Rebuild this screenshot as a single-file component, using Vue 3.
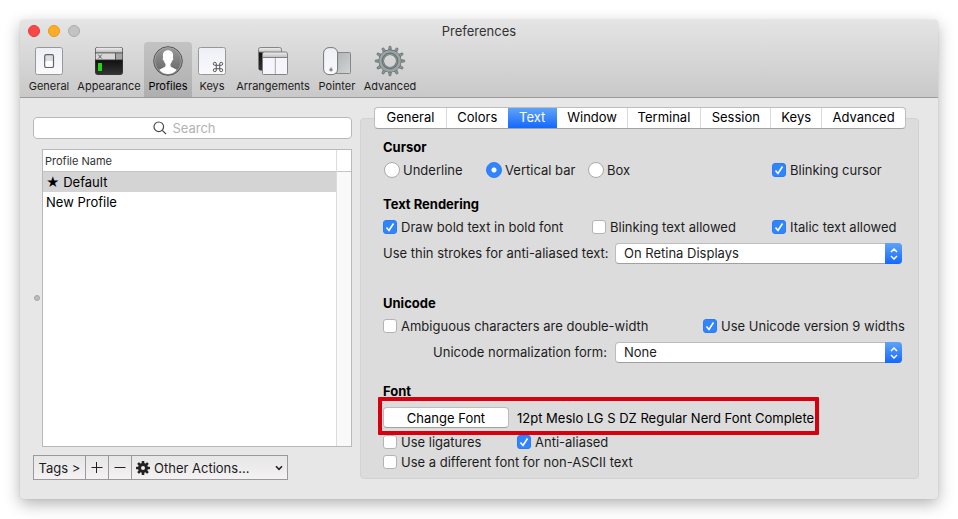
<script setup>
import { ref } from 'vue'

const tools = ['General', 'Appearance', 'Profiles', 'Keys', 'Arrangements', 'Pointer', 'Advanced']
const activeTool = ref('Profiles')

const tabs = ['General', 'Colors', 'Text', 'Window', 'Terminal', 'Session', 'Keys', 'Advanced']
const activeTab = ref('Text')

const profiles = ['★ Default', 'New Profile']
const activeProfile = ref('★ Default')

const search = ref('')
const cursor = ref('Vertical bar')
const cursors = ['Underline', 'Vertical bar', 'Box']

const blinkingCursor = ref(true)
const boldText = ref(true)
const blinkingText = ref(false)
const italicText = ref(true)
const ambiguous = ref(false)
const unicode9 = ref(true)
const ligatures = ref(false)
const antiAliased = ref(true)
const nonAscii = ref(false)
const strokes = ref('On Retina Displays')
const normalization = ref('None')

const teeth = Array.from({ length: 12 }, (_, i) => `rotate(${i * 30} 16 16)`)
const smallTeeth = Array.from({ length: 8 }, (_, i) => `rotate(${i * 45} 7 7)`)
</script>

<template>
  <div class="window">
    <svg class="defs" aria-hidden="true">
      <defs>
        <linearGradient id="paper" x1="0" y1="0" x2="0" y2="1">
          <stop offset="0" stop-color="#eeeff5" />
          <stop offset="1" stop-color="#fafafd" />
        </linearGradient>
        <linearGradient id="bar" x1="0" y1="0" x2="0" y2="1">
          <stop offset="0" stop-color="#f0f0f0" />
          <stop offset="1" stop-color="#bcbcbe" />
        </linearGradient>
        <linearGradient id="dark" x1="0" y1="0" x2="0" y2="1">
          <stop offset="0" stop-color="#111" />
          <stop offset="1" stop-color="#333" />
        </linearGradient>
        <linearGradient id="disc" x1="0" y1="0" x2="0" y2="1">
          <stop offset="0" stop-color="#9a9a9a" />
          <stop offset="1" stop-color="#626262" />
        </linearGradient>
        <linearGradient id="pad" x1="0" y1="0" x2="1" y2="1">
          <stop offset="0" stop-color="#aeb2b2" />
          <stop offset="1" stop-color="#d2d5d5" />
        </linearGradient>
      </defs>
    </svg>

    <header class="chrome">
      <div class="titlebar">
        <div class="lights">
          <button class="light red" aria-label="Close"></button>
          <button class="light amber" aria-label="Minimize"></button>
          <button class="light grey" aria-label="Zoom"></button>
        </div>
        <h1>Preferences</h1>
      </div>
      <nav class="toolbar">
        <button
          v-for="tool in tools"
          :key="tool"
          class="tool"
          :class="{ active: tool === activeTool }"
          @click="activeTool = tool"
        >
          <svg class="tool-icon" viewBox="0 0 32 32" aria-hidden="true">
            <g v-if="tool === 'General'">
              <rect x="2.5" y="2.5" width="27" height="27" rx="2" fill="url(#paper)" stroke="#98989a" />
              <rect x="11.700" y="9.700" width="8.800" height="12.800" rx="1.600" fill="#dcdde2" stroke="#626366" stroke-width="1.200" />
              <rect x="12.500" y="16" width="7.200" height="5.800" rx="1" fill="#fff" />
            </g>

            <g v-else-if="tool === 'Appearance'">
              <rect x="2" y="2" width="28" height="28" rx="3" fill="#3a3a3a" />
              <path d="M2.600 7.500V5q0-2.400 2.400-2.400h22q2.400 0 2.400 2.400v2.500z" fill="url(#bar)" />
              <rect x="2.600" y="8.300" width="19.400" height="6.200" fill="#d7d7d7" />
              <rect x="22.700" y="8.300" width="6.700" height="6.200" fill="#a3a5a7" />
              <path d="M5.200 9.600l3.600 4M8.800 9.600l-3.600 4" stroke="#555" stroke-width=".9" />
              <path d="M2.600 15.200h26.800V27q0 2.400-2.400 2.400H5q-2.400 0-2.400-2.400z" fill="url(#dark)" />
              <rect x="5" y="18" width="4" height="8" fill="#22d50c" />
            </g>

            <g v-else-if="tool === 'Profiles'">
              <circle cx="16" cy="16" r="14.300" fill="url(#disc)" stroke="#555" stroke-width="1" />
              <circle cx="16" cy="16" r="13.300" fill="none" stroke="#aaa" stroke-width=".7" />
              <path
                d="M16 5.200c-3.300 0-5.200 2.200-5.100 5.500 0 .8.200 1.400.3 2-.7.200-.5 1.200-.2 2 .2.600.5 1 .9 1.100.3 1.300.8 2.300 1.600 3.100v2c-.5 1.500-3.700 2.100-6.300 3.800 2.100 2.800 5.200 4.400 8.800 4.400s6.700-1.600 8.800-4.400c-2.600-1.700-5.800-2.300-6.300-3.800v-2c.8-.8 1.300-1.800 1.600-3.100.4-.1.700-.5.900-1.100.3-.8.500-1.800-.2-2 .1-.6.300-1.200.3-2 .1-3.300-1.800-5.500-5.100-5.500z"
                fill="#fff"
              />
            </g>

            <g v-else-if="tool === 'Keys'">
              <rect x="2.500" y="2.500" width="27" height="27" rx="2" fill="url(#paper)" stroke="#98989a" />
              <path
                d="M20.300 20.300h3.400v3.400h-3.400zM20.300 20.300h-1.500a1.500 1.500 0 1 1 1.500-1.500zM23.700 20.300v-1.500a1.500 1.500 0 1 1 1.500 1.500zM23.700 23.700h1.500a1.500 1.500 0 1 1-1.500 1.500zM20.300 23.700v1.500a1.500 1.500 0 1 1-1.500-1.500z"
                fill="none"
                stroke="#555"
                stroke-width="1"
              />
            </g>

            <g v-else-if="tool === 'Arrangements'">
              <path d="M1.500 7h5v18.500h-3q-2 0-2-2z" fill="url(#dark)" />
              <path d="M1.500 7V4.500q0-2 2-2h19q2 0 2 2V8z" fill="url(#bar)" stroke="#77797a" stroke-width=".9" />
              <path d="M5.500 12.500V9q0-2 2-2h21q2 0 2 2v3.500z" fill="url(#bar)" stroke="#77797a" stroke-width=".9" />
              <path d="M5.500 12.500h25v16q0 1-1 1h-23q-1 0-1-1z" fill="#f5f5fb" stroke="#77797a" stroke-width=".9" />
              <path d="M18.300 13v16" stroke="#a5a7a9" />
            </g>

            <g v-else-if="tool === 'Pointer'">
              <rect x="13" y="7.500" width="16.500" height="21" rx="1" fill="url(#pad)" stroke="#7c8080" stroke-width=".9" />
              <rect x="2.600" y="2.600" width="14" height="27" rx="5.500" fill="url(#paper)" stroke="#747678" />
              <circle cx="10" cy="24.700" r="1.700" fill="#8a8d91" />
              <path d="M10 22.700l1-1" stroke="#8a8d91" stroke-width=".8" />
            </g>

            <g v-else>
              <path v-for="t in teeth" :key="t" :transform="t" d="M14.500 5.500l.6-4.200h1.800l.6 4.200z" fill="#8b9595" stroke="#666f70" stroke-width=".7" />
              <circle cx="16" cy="16" r="8.700" fill="none" stroke="#626b6c" stroke-width="5.400" />
              <circle cx="16" cy="16" r="8.700" fill="none" stroke="#9ba5a5" stroke-width="4.200" />
              <circle cx="16" cy="16" r="7.800" fill="none" stroke="#6b7475" stroke-width="1.200" />
            </g>
          </svg>
          <span>{{ tool }}</span>
        </button>
      </nav>
    </header>

    <main class="body">
      <section class="sidebar">
        <div class="search">
          <input v-model="search" type="search" placeholder="Search" aria-label="Search" />
          <svg v-if="!search" viewBox="0 0 14 14" aria-hidden="true">
            <circle cx="5.800" cy="5.800" r="4.800" />
            <path d="M9.300 9.300L13 13" />
          </svg>
        </div>

        <div class="list">
          <table>
            <thead>
              <tr><th>Profile Name</th></tr>
            </thead>
            <tbody>
              <tr
                v-for="p in profiles"
                :key="p"
                :class="{ selected: p === activeProfile }"
                @click="activeProfile = p"
              >
                <td>{{ p }}</td>
              </tr>
            </tbody>
          </table>
          <div class="gutter"></div>
        </div>

        <div class="actions">
          <button class="tags">Tags &gt;</button>
          <button class="sign" aria-label="Add profile">
            <svg viewBox="0 0 12 12" aria-hidden="true"><path d="M.5 5.500h11M5.500 0v11" /></svg>
          </button>
          <button class="sign" aria-label="Remove profile">
            <svg viewBox="0 0 12 12" aria-hidden="true"><path d="M.5 5.500h11" /></svg>
          </button>
          <button class="other">
            <svg class="cog" viewBox="0 0 14 14" aria-hidden="true">
              <rect v-for="t in smallTeeth" :key="t" :transform="t" x="5.700" y="0" width="2.600" height="4" rx=".5" />
              <circle cx="7" cy="7" r="3.500" />
            </svg>
            <span>Other Actions...</span>
            <svg class="caret" viewBox="0 0 8 6" aria-hidden="true"><path d="M1 1.300l3 3 3-3" /></svg>
          </button>
        </div>
        <span class="grip"></span>
      </section>

      <section class="detail">
        <div class="tabs" role="tablist">
          <button
            v-for="tab in tabs"
            :key="tab"
            role="tab"
            :aria-selected="tab === activeTab"
            :class="{ on: tab === activeTab }"
            @click="activeTab = tab"
          >{{ tab }}</button>
        </div>

        <div class="panel">
          <section class="group cursor-group">
            <h2>Cursor</h2>
            <div class="row radios">
              <label v-for="c in cursors" :key="c" class="radio">
                <input v-model="cursor" type="radio" name="cursor" :value="c" />{{ c }}
              </label>
              <label class="check">
                <span class="box"><input v-model="blinkingCursor" type="checkbox" /><svg viewBox="0 0 14 14"><path d="M3.500 7.500l2.500 3 4.500-7" /></svg></span>
                Blinking cursor
              </label>
            </div>
          </section>

          <section class="group rendering-group">
            <h2>Text Rendering</h2>
            <div class="row thirds">
              <label class="check">
                <span class="box"><input v-model="boldText" type="checkbox" /><svg viewBox="0 0 14 14"><path d="M3.500 7.500l2.500 3 4.500-7" /></svg></span>
                Draw bold text in bold font
              </label>
              <label class="check">
                <span class="box"><input v-model="blinkingText" type="checkbox" /><svg viewBox="0 0 14 14"><path d="M3.500 7.500l2.500 3 4.500-7" /></svg></span>
                Blinking text allowed
              </label>
              <label class="check">
                <span class="box"><input v-model="italicText" type="checkbox" /><svg viewBox="0 0 14 14"><path d="M3.500 7.500l2.500 3 4.500-7" /></svg></span>
                Italic text allowed
              </label>
            </div>
            <div class="field">
              <label for="strokes">Use thin strokes for anti-aliased text:</label>
              <div class="select">
                <select id="strokes" v-model="strokes">
                  <option>On Retina Displays</option>
                  <option>Always</option>
                  <option>Never</option>
                </select>
                <span class="stepper"><svg viewBox="0 0 8 12"><path d="M1 4l3-3 3 3M1 8l3 3 3-3" /></svg></span>
              </div>
            </div>
          </section>

          <section class="group unicode-group">
            <h2>Unicode</h2>
            <div class="row ends">
              <label class="check">
                <span class="box"><input v-model="ambiguous" type="checkbox" /><svg viewBox="0 0 14 14"><path d="M3.500 7.500l2.500 3 4.500-7" /></svg></span>
                Ambiguous characters are double-width
              </label>
              <label class="check">
                <span class="box"><input v-model="unicode9" type="checkbox" /><svg viewBox="0 0 14 14"><path d="M3.500 7.500l2.500 3 4.500-7" /></svg></span>
                Use Unicode version 9 widths
              </label>
            </div>
            <div class="field">
              <label for="normalization">Unicode normalization form:</label>
              <div class="select">
                <select id="normalization" v-model="normalization">
                  <option>None</option>
                  <option>NFC</option>
                  <option>NFD</option>
                </select>
                <span class="stepper"><svg viewBox="0 0 8 12"><path d="M1 4l3-3 3 3M1 8l3 3 3-3" /></svg></span>
              </div>
            </div>
          </section>

          <section class="group font-group">
            <h2>Font</h2>
            <div class="font-row">
              <button class="push">Change Font</button>
              <span>12pt Meslo LG S DZ Regular Nerd Font Complete</span>
              <span class="highlight"></span>
            </div>
            <div class="row halves">
              <label class="check">
                <span class="box"><input v-model="ligatures" type="checkbox" /><svg viewBox="0 0 14 14"><path d="M3.500 7.500l2.500 3 4.500-7" /></svg></span>
                Use ligatures
              </label>
              <label class="check">
                <span class="box"><input v-model="antiAliased" type="checkbox" /><svg viewBox="0 0 14 14"><path d="M3.500 7.500l2.500 3 4.500-7" /></svg></span>
                Anti-aliased
              </label>
            </div>
            <div class="row">
              <label class="check">
                <span class="box"><input v-model="nonAscii" type="checkbox" /><svg viewBox="0 0 14 14"><path d="M3.500 7.500l2.500 3 4.500-7" /></svg></span>
                Use a different font for non-ASCII text
              </label>
            </div>
          </section>
        </div>
      </section>
    </main>
  </div>
</template>

<style>
body {
  background: #fff;
}
</style>

<style scoped>
* {
  box-sizing: border-box;
}

.window {
  display: flex;
  flex-direction: column;
  min-height: calc(100vh - 40px);
  margin: 20px;
  border-radius: 4px;
  background: #e7e7e7;
  box-shadow: 0 5px 16px rgba(0, 0, 0, 0.3), 0 0 2px rgba(0, 0, 0, 0.1);
  color: #1c1c1c;
  font: 13px/16px Inter, "Liberation Sans", sans-serif;
}

.defs {
  position: absolute;
  width: 0;
  height: 0;
}

button,
input,
select {
  margin: 0;
  padding: 0;
  border: 0;
  background: none;
  color: inherit;
  font: inherit;
  appearance: none;
}

h1,
h2 {
  margin: 0;
}

.chrome {
  border-bottom: 1px solid #9b9b9b;
  border-radius: 4px 4px 0 0;
  background: linear-gradient(#e4e4e4, #c9c9c9);
}

.titlebar {
  display: grid;
  grid-template-columns: 1fr auto 1fr;
  align-items: center;
  height: 22px;
  padding: 0 8px;
}

.titlebar h1 {
  color: #333;
  font-size: 13px;
  font-weight: 400;
}

.lights {
  display: flex;
  gap: 8px;
}

.light {
  width: 12px;
  height: 12px;
  border: 1px solid;
  border-radius: 50%;
}

.red {
  border-color: #e2383b;
  background: #fc4749;
}

.amber {
  border-color: #e29a20;
  background: #fdae24;
}

.grey {
  border-color: #acacac;
  background: #c3c3c3;
}

.toolbar {
  display: grid;
  grid-template-columns: 50px 70px 48px 40px 82px 46px 60px;
  padding: 0 4px;
}

.tool {
  display: flex;
  flex-direction: column;
  align-items: center;
  gap: 2px;
  height: 55px;
  padding-top: 3px;
  border-radius: 4px 4px 0 0;
  font-size: 11px;
  line-height: 14px;
}

.tool.active {
  background: linear-gradient(#c3c3c3, #afafaf);
  color: #000;
}

.tool-icon {
  width: 32px;
  height: 32px;
}

.body {
  display: grid;
  flex: 1;
  grid-template-columns: 319px 1fr;
  gap: 8px;
  padding: 0 19px 0 13px;
}

.sidebar {
  position: relative;
  display: flex;
  flex-direction: column;
  padding: 19px 0;
}

.search {
  position: relative;
}

.search input {
  width: 100%;
  height: 22px;
  padding-left: 16px;
  border: 1px solid #b8b8b8;
  border-radius: 4px;
  background: #fff;
  text-align: center;
}

.search input::placeholder {
  color: #b2b2b2;
}

.search svg {
  position: absolute;
  top: 4px;
  left: 120px;
  width: 14px;
  height: 14px;
  fill: none;
  stroke: #4a4a4a;
  stroke-width: 1.2;
}

.list {
  display: flex;
  flex: 1;
  align-items: stretch;
  margin: 10px 0 8px 9px;
  border: 1px solid #b9b9b9;
  background: #fff;
}

table {
  flex: 1;
  align-self: flex-start;
  border-spacing: 0;
}

th {
  height: 22px;
  padding: 0 2px;
  border-bottom: 1px solid #c4c4c4;
  color: #333;
  font-size: 11px;
  font-weight: 400;
  line-height: 14px;
  text-align: left;
}

td {
  height: 20px;
  padding: 0 3px;
  color: #000;
}

.selected {
  background: #d4d4d4;
}

.gutter {
  width: 15px;
  border-left: 1px solid #dcdcdc;
  background: linear-gradient(#fff 21px, #c4c4c4 21px, #c4c4c4 22px, #f9f9f9 22px);
}

.actions {
  display: flex;
  align-self: flex-start;
  height: 25px;
  border: 1px solid #9a9a9a;
}

.actions button {
  display: flex;
  align-items: center;
  justify-content: center;
  background: linear-gradient(#e6e6e6, #f4f2f3);
}

.actions button + button {
  border-left: 1px solid #9a9a9a;
}

.actions .tags {
  width: 51px;
}

.actions .sign {
  width: 23px;
}

.sign svg {
  width: 12px;
  height: 12px;
  fill: none;
  stroke: #222;
}

.actions .other {
  gap: 4px;
  width: 156px;
  padding: 0 4px;
  justify-content: flex-start;
}

.cog {
  width: 14px;
  height: 14px;
}

.cog rect {
  fill: #222;
}

.cog circle {
  fill: none;
  stroke: #222;
  stroke-width: 3;
}

.caret {
  width: 8px;
  height: 6px;
  margin-left: auto;
  fill: none;
  stroke: #222;
  stroke-width: 1.6;
}

.grip {
  position: absolute;
  top: 197px;
  left: 1px;
  width: 6px;
  height: 6px;
  border: 1px solid #a6a6a6;
  border-radius: 50%;
  background: #bcbcbc;
}

.detail {
  display: flex;
  flex-direction: column;
  padding: 9px 0 20px;
}

.tabs {
  position: relative;
  display: grid;
  grid-template-columns: 71fr 62fr 49fr 70fr 74fr 70fr 51fr 84fr;
  height: 22px;
  margin: 0 13px -11px 14px;
  border: 1px solid #bdbdbd;
  border-bottom-color: #a2a2a2;
  border-radius: 4px;
  background: #fff;
  color: #000;
  overflow: hidden;
}

.tabs button {
  padding-bottom: 2px;
}

.tabs button + button {
  border-left: 1px solid #d9d9d9;
}

.tabs .on,
.tabs .on + button {
  border-left-color: transparent;
}

.tabs button.on {
  border: 0;
  background: linear-gradient(#5fa4f8, #1568fb);
  color: #fff;
}

.panel {
  display: flex;
  flex: 1;
  flex-direction: column;
  padding: 20px 16px 6px 22px;
  border: 1px solid #d2d2d2;
  border-radius: 4px;
  background: #dcdcdc;
}

.group {
  display: flex;
  flex-direction: column;
}

.rendering-group {
  margin-top: 16px;
}

.unicode-group {
  margin-top: 31px;
}

.font-group {
  margin-top: 20px;
}

h2 {
  color: #000;
  font-size: 13px;
  font-weight: 700;
  line-height: 16px;
}

.row {
  display: grid;
  align-items: center;
  height: 20px;
}

h2 + .row {
  margin-top: 5px;
}

.radios {
  grid-template-columns: 102px 102px 1fr 130px;
}

.thirds {
  grid-template-columns: 209px 1fr 130px;
}

.ends {
  grid-template-columns: 1fr 199px;
}

.halves {
  grid-template-columns: 134px 1fr;
}

.check,
.radio {
  display: flex;
  align-items: center;
  gap: 4px;
  white-space: nowrap;
}

.box {
  position: relative;
  width: 14px;
  height: 14px;
}

.box input {
  display: block;
  width: 14px;
  height: 14px;
  border: 1px solid #b4b4b4;
  border-radius: 3px;
  background: #fff;
}

.box input:checked {
  border-color: #2c7bf5;
  background: #3185fc;
}

.box svg {
  position: absolute;
  inset: 0;
  fill: none;
  stroke: #fff;
  stroke-width: 1.6;
  pointer-events: none;
}

.radio input {
  width: 16px;
  height: 16px;
  border: 1px solid #a9a9a9;
  border-radius: 50%;
  background: #fff;
}

.radio {
  padding-left: 1px;
  gap: 3px;
}

.radio input:checked {
  border-color: #2c7bf5;
  background: radial-gradient(circle, #fff 0 2px, #3185fc 3px);
}

.field {
  display: grid;
  grid-template-columns: 224px 1fr;
  align-items: center;
  gap: 8px;
  margin-top: 6px;
}

.field label {
  padding-bottom: 1px;
  text-align: right;
  white-space: nowrap;
}

.select {
  position: relative;
  height: 21px;
}

.select select {
  width: 100%;
  height: 21px;
  padding: 0 24px 1px 8px;
  border: 1px solid #bcbcbc;
  border-bottom-color: #a0a0a0;
  border-radius: 4px;
  background: #fff;
}

.stepper {
  position: absolute;
  top: 0;
  right: 0;
  display: flex;
  align-items: center;
  justify-content: center;
  width: 17px;
  height: 21px;
  border-radius: 0 4px 4px 0;
  background: linear-gradient(#5fa4f8, #1568fb);
  pointer-events: none;
}

.stepper svg {
  width: 8px;
  height: 12px;
  fill: none;
  stroke: #fff;
  stroke-width: 1.5;
}

.font-row {
  position: relative;
  display: flex;
  align-items: center;
  align-self: flex-start;
  gap: 8px;
  margin: 8px 0 4px;
  color: #000;
  white-space: nowrap;
}

.push {
  width: 126px;
  height: 21px;
  border: 1px solid #bcbcbc;
  border-bottom-color: #a0a0a0;
  border-radius: 4px;
  background: #fff;
}

.highlight {
  position: absolute;
  inset: -10px -5px -7px -5px;
  border: 4px solid #d8000c;
  border-radius: 1px;
  pointer-events: none;
}
</style>
